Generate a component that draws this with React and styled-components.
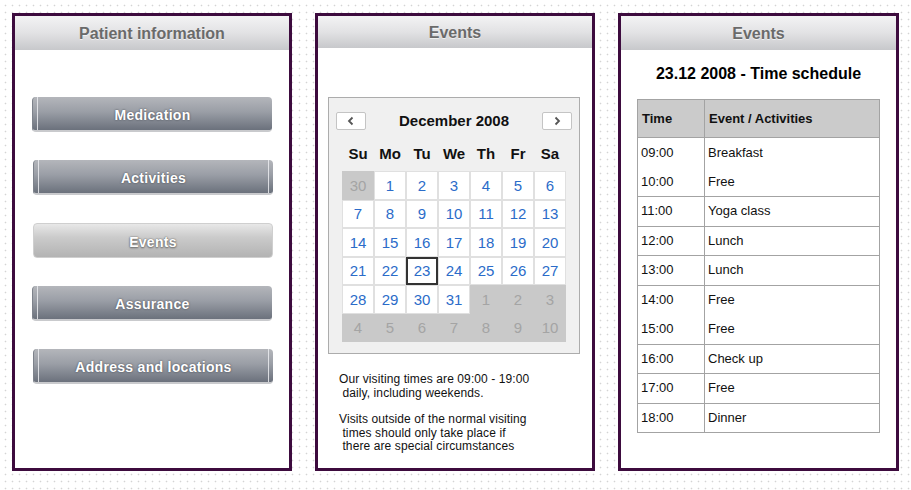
import React from "react";
import styled, { createGlobalStyle, css } from "styled-components";

const Global = createGlobalStyle`
  html, body { margin: 0; padding: 0; }
  body {
    width: 911px;
    height: 490px;
    overflow: hidden;
    font-family: "Liberation Sans", Arial, sans-serif;
    background-color: #ffffff;
    background-image: radial-gradient(circle, #d4d4d4 0.7px, transparent 1.1px);
    background-size: 7px 7px;
    background-position: 2px 2px;
  }
`;

const Page = styled.div`
  display: flex;
  gap: 23px;
  padding: 13px 0 0 12px;
`;

const Panel = styled.section`
  box-sizing: border-box;
  width: ${(p) => p.$w || 280}px;
  height: 458px;
  border: 3px solid #3d0b3e;
  background: #ffffff;
  display: flex;
  flex-direction: column;
`;

const Header = styled.div`
  box-sizing: border-box;
  height: ${(p) => p.$h || 34}px;
  padding-top: 2px;
  flex: none;
  display: flex;
  align-items: center;
  justify-content: center;
  background: linear-gradient(#f3f3f4, #e2e2e4 50%, #c7c8cb);
  color: #6a6a6a;
  font-weight: bold;
  font-size: 16px;
  text-shadow: 0 1px 0 rgba(255, 255, 255, 0.6);
`;

/* ---------- Panel 1 ---------- */
const Menu = styled.nav`
  display: flex;
  flex-direction: column;
  gap: 28px;
  padding-top: 47px;
`;

const lineAt = (side) => css`
  &::${side === "left" ? "before" : "after"} {
    content: "";
    position: absolute;
    top: 0;
    bottom: 0;
    ${side}: 4px;
    width: 1px;
    background: rgba(235, 236, 240, 0.85);
  }
`;

const MenuButton = styled.button`
  position: relative;
  box-sizing: border-box;
  width: 240px;
  height: 35px;
  margin-left: ${(p) => 17 + (p.$shift || 0)}px;
  border-radius: 4px;
  font-family: "Liberation Sans", Arial, sans-serif;
  font-weight: bold;
  font-size: 14px;
  color: #ffffff;
  letter-spacing: 0.3px;
  padding: 2px 0 0;
  cursor: pointer;
  ${(p) =>
    p.$active
      ? css`
          background: linear-gradient(#e8e8e8, #cbcbcb 40%, #b3b3b3);
          border: 1px solid #cfcfcf;
          text-shadow: 0 0 1px #6e6e6e, 0 0 2px #808080, 0 1px 2px rgba(80, 80, 80, 0.8);
        `
      : css`
          background: linear-gradient(#b4b6bb, #9a9ea6 45%, #6b717c);
          border: none;
          border-left: 1px solid #7d828b;
          border-bottom: 2px solid #c9cacd;
          text-shadow: 0 0 2px rgba(40, 44, 52, 0.8);
        `}
  ${(p) => p.$left && lineAt("left")}
  ${(p) => p.$right && lineAt("right")}
`;

/* ---------- Panel 2 ---------- */
const Calendar = styled.div`
  box-sizing: border-box;
  margin: 49px 0 0 10px;
  width: 252px;
  height: 257px;
  border: 1px solid #acacac;
  background: #f0f0f0;
  padding: 14px 13px 0 13px;
`;

const CalNav = styled.div`
  display: flex;
  align-items: center;
  justify-content: space-between;
  margin: 0 -6px;
  height: 18px;
`;

const NavButton = styled.button`
  width: 30px;
  height: 18px;
  padding: 0;
  display: flex;
  align-items: center;
  justify-content: center;
  background: #ffffff;
  border: 1px solid #c4c4c4;
  border-radius: 2px;
  color: #555;
`;

const MonthTitle = styled.div`
  font-weight: bold;
  font-size: 15px;
  color: #111;
  margin-top: -2px;
`;

const Weekdays = styled.div`
  display: grid;
  grid-template-columns: repeat(7, 32px);
  margin-top: 12px;
  height: 22px;
  align-items: center;
`;

const Weekday = styled.div`
  text-align: center;
  font-weight: bold;
  font-size: 15px;
  color: #111;
`;

const DayGrid = styled.div`
  display: grid;
  grid-template-columns: repeat(7, 32px);
  grid-auto-rows: 28.5px;
  margin-top: 7px;
`;

const Day = styled.div`
  box-sizing: border-box;
  display: flex;
  align-items: center;
  justify-content: center;
  font-size: 15px;
  ${(p) =>
    p.$muted
      ? css`
          background: #c9c9c9;
          color: #a4a4a4;
        `
      : css`
          background: #ffffff;
          color: #2b6cc9;
          border: 1px solid #e0e0e0;
        `}
  ${(p) =>
    p.$selected &&
    css`
      border: 2px solid #333333;
    `}
`;

const Note = styled.div`
  padding: 19px 0 0 21px;
  font-size: 12px;
  line-height: 13.5px;
  letter-spacing: 0.1px;
  color: #111;
  white-space: pre;
  display: flex;
  flex-direction: column;
  gap: 13px;
`;

/* ---------- Panel 3 ---------- */
const ScheduleTitle = styled.h2`
  margin: 15px 0 0;
  text-align: center;
  font-size: 16px;
  font-weight: bold;
  color: #000;
  line-height: 18px;
`;

const Table = styled.table`
  margin: 16px 0 0 16px;
  width: 243px;
  border-collapse: collapse;
  font-size: 13px;
  color: #111;
`;

const Th = styled.th`
  height: 38px;
  padding: 0 0 0 4px;
  text-align: left;
  background: #cbcbcb;
  border: 1px solid #a3a3a3;
  font-weight: bold;
  width: ${(p) => p.$w || "auto"};
  box-sizing: border-box;
`;

const Td = styled.td`
  height: 29.5px;
  padding: 0 0 1px 3px;
  border-left: 1px solid #a3a3a3;
  border-right: 1px solid #a3a3a3;
  border-top: ${(p) => (p.$joined ? "none" : "1px solid #a3a3a3")};
  border-bottom: ${(p) => (p.$joinNext ? "none" : "1px solid #a3a3a3")};
  box-sizing: border-box;
`;

const Chevron = ({ dir }) => (
  <svg width="8" height="10" viewBox="0 0 8 10">
    <path
      d={dir === "left" ? "M5.5 1.5 L2 5 L5.5 8.5" : "M2.5 1.5 L6 5 L2.5 8.5"}
      fill="none"
      stroke="#555"
      strokeWidth="1.8"
    />
  </svg>
);

const menu = [
  { label: "Medication", left: true, shift: 0 },
  { label: "Activities", left: true, right: true, shift: 1 },
  { label: "Events", active: true, shift: 1 },
  { label: "Assurance", left: true, shift: 0 },
  { label: "Address and locations", left: true, right: true, shift: 1 },
];

const days = [];
days.push({ n: 30, muted: true });
for (let i = 1; i <= 31; i++) days.push({ n: i, selected: i === 23 });
for (let i = 1; i <= 10; i++) days.push({ n: i, muted: true });

const schedule = [
  ["09:00", "Breakfast", false, true],
  ["10:00", "Free", true, false],
  ["11:00", "Yoga class"],
  ["12:00", "Lunch"],
  ["13:00", "Lunch"],
  ["14:00", "Free", false, true],
  ["15:00", "Free", true, false],
  ["16:00", "Check up"],
  ["17:00", "Free"],
  ["18:00", "Dinner"],
];

export default function App() {
  return (
    <>
      <Global />
      <Page>
        <Panel>
          <Header>Patient information</Header>
          <Menu>
            {menu.map((m) => (
              <MenuButton
                key={m.label}
                $active={m.active}
                $left={m.left}
                $right={m.right}
                $shift={m.shift}
              >
                {m.label}
              </MenuButton>
            ))}
          </Menu>
        </Panel>

        <Panel>
          <Header $h={32}>Events</Header>
          <Calendar>
            <CalNav>
              <NavButton aria-label="Previous month">
                <Chevron dir="left" />
              </NavButton>
              <MonthTitle>December 2008</MonthTitle>
              <NavButton aria-label="Next month">
                <Chevron dir="right" />
              </NavButton>
            </CalNav>
            <Weekdays>
              {["Su", "Mo", "Tu", "We", "Th", "Fr", "Sa"].map((d) => (
                <Weekday key={d}>{d}</Weekday>
              ))}
            </Weekdays>
            <DayGrid>
              {days.map((d, i) => (
                <Day key={i} $muted={d.muted} $selected={d.selected}>
                  {d.n}
                </Day>
              ))}
            </DayGrid>
          </Calendar>
          <Note>
            <div>{"Our visiting times are 09:00 - 19:00\n daily, including weekends."}</div>
            <div>
              {"Visits outside of the normal visiting\n times should only take place if\n there are special circumstances"}
            </div>
          </Note>
        </Panel>

        <Panel $w={281}>
          <Header>Events</Header>
          <ScheduleTitle>23.12 2008 - Time schedule</ScheduleTitle>
          <Table>
            <thead>
              <tr>
                <Th $w="67px">Time</Th>
                <Th>Event / Activities</Th>
              </tr>
            </thead>
            <tbody>
              {schedule.map(([t, e, joined, joinNext]) => (
                <tr key={t}>
                  <Td $joined={joined} $joinNext={joinNext}>{t}</Td>
                  <Td $joined={joined} $joinNext={joinNext}>{e}</Td>
                </tr>
              ))}
            </tbody>
          </Table>
        </Panel>
      </Page>
    </>
  );
}
